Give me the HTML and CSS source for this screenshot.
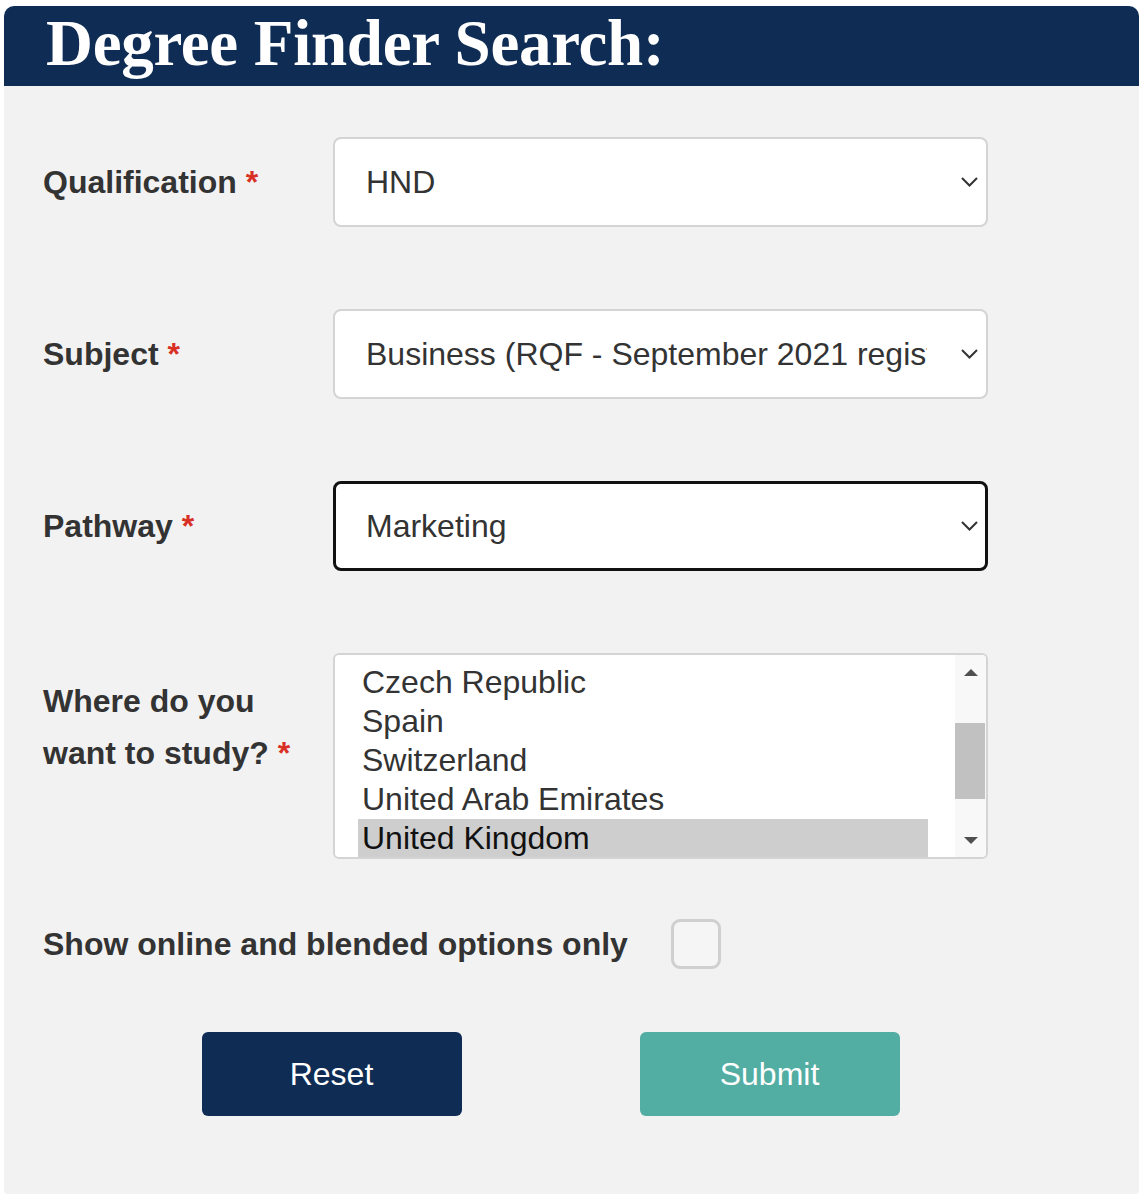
FILE: index.html
```html
<!DOCTYPE html>
<html lang="en">
<head>
<meta charset="utf-8">
<title>Degree Finder Search</title>
<link rel="stylesheet" href="styles.css">
</head>
<body>
<div class="card">
  <div class="card-header">
    <h1 class="title">Degree Finder Search:</h1>
  </div>
  <form class="card-body">
    <div class="row">
      <label class="label">Qualification <span class="req">*</span></label>
      <div class="select">
        <span class="select-text">HND</span>
        <svg class="chevron" width="17" height="10" viewBox="0 0 17 10"><path d="M1 1l7.5 7.5L16 1" fill="none" stroke="#333" stroke-width="2"/></svg>
      </div>
    </div>
    <div class="row">
      <label class="label">Subject <span class="req">*</span></label>
      <div class="select">
        <span class="select-text">Business (RQF - September 2021 registration)</span>
        <svg class="chevron" width="17" height="10" viewBox="0 0 17 10"><path d="M1 1l7.5 7.5L16 1" fill="none" stroke="#333" stroke-width="2"/></svg>
      </div>
    </div>
    <div class="row">
      <label class="label">Pathway <span class="req">*</span></label>
      <div class="select select-focus">
        <span class="select-text">Marketing</span>
        <svg class="chevron" width="17" height="10" viewBox="0 0 17 10"><path d="M1 1l7.5 7.5L16 1" fill="none" stroke="#333" stroke-width="2"/></svg>
      </div>
    </div>
    <div class="row row-top">
      <label class="label label-multi">Where do you want to study? <span class="req">*</span></label>
      <div class="listbox">
        <ul class="options">
          <li class="option">Czech Republic</li>
          <li class="option">Spain</li>
          <li class="option">Switzerland</li>
          <li class="option">United Arab Emirates</li>
          <li class="option option-selected">United Kingdom</li>
        </ul>
        <div class="scrollbar">
          <div class="sb-btn"><span class="tri-up"></span></div>
          <div class="sb-track"><div class="sb-thumb"></div></div>
          <div class="sb-btn"><span class="tri-down"></span></div>
        </div>
      </div>
    </div>
    <div class="row row-check">
      <span class="label label-check">Show online and blended options only</span>
      <span class="checkbox"></span>
    </div>
    <div class="buttons">
      <button type="button" class="btn btn-reset">Reset</button>
      <button type="button" class="btn btn-submit">Submit</button>
    </div>
  </form>
</div>
</body>
</html>
```
FILE: styles.css
```css
html, body {
  margin: 0;
  padding: 0;
  background: #ffffff;
}
body {
  font-family: "Liberation Sans", Arial, sans-serif;
  color: #333333;
}
.card {
  margin: 6px 3px 0 4px;
}
.card-header {
  background: #0f2d54;
  height: 80px;
  border-radius: 10px 10px 0 0;
  padding-left: 42px;
  box-sizing: border-box;
}
.title {
  margin: 0;
  font-family: "Liberation Serif", "Times New Roman", serif;
  font-weight: bold;
  font-size: 65px;
  line-height: 75px;
  color: #ffffff;
  letter-spacing: -0.3px;
}
.card-body {
  display: block;
  margin: 0;
  background: #f2f2f2;
  padding: 51px 0 78px 39px;
  border-radius: 0 0 4px 4px;
}
.row {
  display: flex;
  align-items: center;
  margin-bottom: 82px;
}
.row-top {
  align-items: flex-start;
  margin-bottom: 60px;
}
.row-check {
  margin-bottom: 63px;
}
.label {
  width: 290px;
  flex: none;
  font-weight: bold;
  font-size: 32px;
  color: #333333;
}
.label-multi {
  margin-top: 22px;
  line-height: 52px;
  padding-right: 30px;
  box-sizing: border-box;
}
.label-check {
  width: auto;
  margin-right: 43px;
}
.req {
  color: #d93025;
}
.select {
  width: 655px;
  height: 90px;
  box-sizing: border-box;
  background: #ffffff;
  border: 2px solid #d4d4d4;
  border-radius: 8px;
  display: flex;
  align-items: center;
  padding-left: 31px;
}
.select-focus {
  border: 3px solid #111111;
  padding-left: 30px;
}
.select-text {
  flex: 1;
  min-width: 0;
  overflow: hidden;
  white-space: nowrap;
  font-size: 32px;
  color: #333333;
}
.chevron {
  flex: none;
  margin-left: 34px;
  margin-right: 8px;
}
.select-focus .chevron {
  margin-right: 7px;
}
.listbox {
  width: 655px;
  height: 206px;
  box-sizing: border-box;
  background: #ffffff;
  border: 2px solid #d4d4d4;
  border-radius: 6px;
  display: flex;
  overflow: hidden;
}
.options {
  list-style: none;
  margin: 0;
  flex: 1;
  padding: 8px 27px 0 23px;
  overflow: hidden;
}
.option {
  height: 39px;
  line-height: 39px;
  padding-left: 4px;
  font-size: 32px;
  color: #333333;
  white-space: nowrap;
}
.option-selected {
  background: #cecece;
  color: #111111;
}
.scrollbar {
  width: 31px;
  flex: none;
  display: flex;
  flex-direction: column;
  background: #f8f8f8;
}
.sb-btn {
  height: 34px;
  display: flex;
  align-items: center;
  justify-content: center;
}
.tri-up {
  width: 0;
  height: 0;
  border-left: 7px solid transparent;
  border-right: 7px solid transparent;
  border-bottom: 7px solid #505050;
}
.tri-down {
  width: 0;
  height: 0;
  border-left: 7px solid transparent;
  border-right: 7px solid transparent;
  border-top: 7px solid #505050;
}
.sb-track {
  flex: 1;
  padding-top: 34px;
}
.sb-thumb {
  height: 76px;
  margin-right: 1px;
  background: #c1c1c1;
}
.checkbox {
  width: 50px;
  height: 50px;
  box-sizing: border-box;
  border: 3px solid #cfcfcf;
  border-radius: 9px;
  background: #f5f5f5;
}
.buttons {
  width: 1015px;
  display: flex;
  justify-content: center;
  gap: 178px;
}
.btn {
  width: 260px;
  height: 84px;
  border: none;
  border-radius: 6px;
  font-family: "Liberation Sans", Arial, sans-serif;
  font-size: 32px;
  color: #ffffff;
  cursor: pointer;
}
.btn-reset {
  background: #0f2d54;
}
.btn-submit {
  background: #52ada3;
}
```
